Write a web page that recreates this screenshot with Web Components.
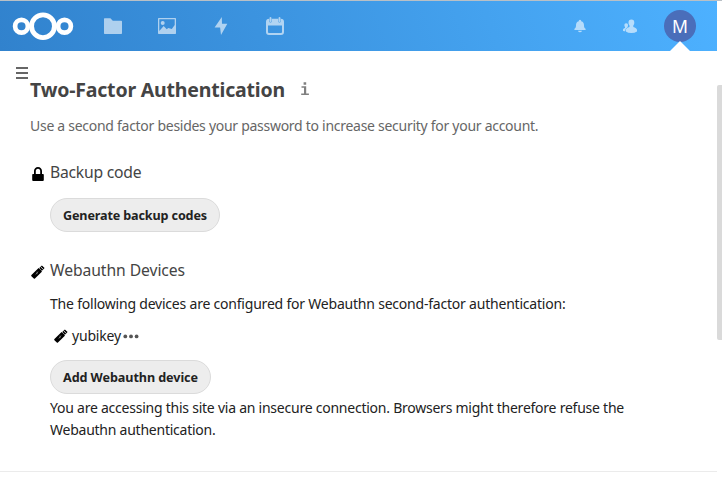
<!DOCTYPE html>
<html lang="en">
<head>
<meta charset="utf-8">
<title>Two-Factor Authentication</title>
<style>
  html, body { margin: 0; height: 100%; overflow: hidden; background: #fff; }
  body { font-family: "Noto Sans", "Open Sans", sans-serif; font-size: 14px; line-height: 22px; color: #222; }
</style>
</head>
<body>
<settings-page></settings-page>
<script>
const define = (name, html, extra = {}) => {
  const t = document.createElement('template');
  t.innerHTML = html;
  customElements.define(name, class extends HTMLElement {
    constructor() {
      super();
      this.attachShadow({ mode: 'open' }).append(t.content.cloneNode(true));
    }
    connectedCallback() { if (extra.connected) extra.connected.call(this); }
  });
};

const icons = {
  logo: [62, 30, '<g fill="none" stroke="#fff"><circle cx="31" cy="15.2" r="11.4" stroke-width="4.8"/><circle cx="9.5" cy="15.2" r="6.4" stroke-width="4.7"/><circle cx="52.5" cy="15.2" r="6.4" stroke-width="4.7"/></g>'],
  folder: [20, 20, '<path fill="#fff" d="M1.6 2.2h5.8l2.4 2.5h8.4q.8 0 .8.8v11.7q0 .8-.8.8H1.8q-.8 0-.8-.8V3q0-.8.6-.8z"/>'],
  photo: [20, 20, '<path fill="#fff" fill-rule="evenodd" d="M1.7 2h16.6q.7 0 .7.7v14.6q0 .7-.7.7H1.7q-.7 0-.7-.7V2.7q0-.7.7-.7zM2.3 3.2v11.900L6.700 10.100l3 3.200 1.600-1.200 3.500 1 2.900-4.100V3.200z"/><circle cx="5.7" cy="7" r="2" fill="#fff"/>'],
  bolt: [20, 20, '<path fill="#fff" d="M10.800 1 3.600 11.500h5.500L10 19l6.300-11.200h-5.300z"/>'],
  calendar: [20, 20, '<path fill="#fff" fill-rule="evenodd" d="M4.300 2.800v2.400a1.200 1.200 0 0 0 2.400 0V2.800h6.600v2.400a1.200 1.200 0 0 0 2.400 0V2.800q3.300 0 3.300 3v10.100q0 3-3 3H4q-3 0-3-3V5.800q0-3 3.300-3zM3 9.400V16q0 .9.900.9h12.200q.9 0 .9-.9V9.400z"/><path stroke="#fff" stroke-width="1.9" stroke-linecap="round" d="M5.500 2v3M14.500 2v3"/>'],
  bell: [16, 16, '<path fill="#fff" d="M8 1.800c-1 0-1.200.8-1.200 1.400C4.700 3.700 4 5.300 4 7.500c0 1.600-.4 2.500-1.600 3.300V12h11.200v-1.200C12.400 10 12 9.100 12 7.500c0-2.200-.7-3.800-2.800-4.300 0-.6-.2-1.400-1.200-1.400zM6 12.700a2.050 2.050 0 0 0 4 0z"/>'],
  contacts: [16, 16, '<path fill="#fff" d="M9.400 1.500c-2.100 0-2.900 1.300-2.900 3 0 1.300.3 2.100 1 3v1.400c-2.100.7-3.600 1.500-3.600 3.100v1.500q2 1.500 5.400 1.500t5.700-1.500V12c0-1.700-1.700-2.400-3.700-3.100V7.500c.7-.9 1-1.700 1-3 0-1.700-.8-3-2.900-3z"/><path fill="#fff" d="M4.200 5.200c-1.300 0-1.800.9-1.800 2 0 .9.200 1.400.6 1.800v.9c-1.300.4-2 .9-2 1.800v1q.8.500 2.100.6.100-2.900 2.500-4.100l-.1-.3q.5-.5.500-1.700c0-1.100-.5-2-1.800-2z"/>'],
  menu: [14, 14, '<path fill="#666" d="M1 1h12v2H1zM1 6h12v2H1zM1 11h12v2H1z"/>'],
  lock: [16, 16, '<path fill="#000" fill-rule="evenodd" d="M8 1C5.700 1 4 2.700 4 5v3H3q-.8 0-.8.800V14q0 1 1 1h9.600q1 0 1-1V8.800q0-.8-.8-.8h-1V5c0-2.300-1.700-4-4-4zm0 1.800c1.400 0 2.200 1 2.200 2.200v3H5.800V5C5.800 3.800 6.600 2.800 8 2.800z"/>'],
  usb: [16, 16, '<g transform="translate(8 8) rotate(-45)"><rect x="-7.6" y="-2.5" width="11" height="5" rx=".8"/><path fill-rule="evenodd" d="M3.700-1.900h3.700v3.800H3.700zM5-1.100v.8h1V-1.100zM5 .3v.8h1V.3z"/><path stroke="#fff" stroke-width=".3" fill="none" d="M-3.500 0h4M-1.500 0l1.200-1M-2.500 0l1.200 1"/></g>'],
  dots: [16, 16, '<g fill="#555"><circle cx="2.3" cy="8.4" r="1.9"/><circle cx="8" cy="8.4" r="1.9"/><circle cx="13.6" cy="8.4" r="1.9"/></g>'],
  info: [16, 16, '<path fill="#808080" d="M6.600 1.300h2.600v2.400H6.600zM4.500 5.200h4.700v7.200h2.700V14H4.200v-1.600H7V6.800H4.500z"/>']
};
customElements.define('ui-icon', class extends HTMLElement {
  constructor() { super(); this.attachShadow({ mode: 'open' }); }
  connectedCallback() {
    const [w, h, body] = icons[this.getAttribute('name')];
    this.shadowRoot.innerHTML = `<style>:host{display:block;flex:none}svg{display:block}</style><svg width="${w}" height="${h}" viewBox="0 0 ${w} ${h}">${body}</svg>`;
  }
});

/* A line of text whose tracking is adjusted to fill the given width. */
define('text-line', `<style>
  :host { display: block; white-space: nowrap; }
  span { display: inline-block; }
</style><span><slot></slot></span>`, {
  connected() {
    const fit = () => {
      const span = this.shadowRoot.querySelector('span');
      span.style.letterSpacing = '0';
      const w = span.getBoundingClientRect().width;
      const n = this.textContent.length;
      if (w) span.style.letterSpacing = ((+this.getAttribute('width') - w) / n).toFixed(4) + 'px';
    };
    fit();
    requestAnimationFrame(fit);
  }
});

define('pill-button', `<style>
  :host { display: flex; width: max-content; }
  button { box-sizing: border-box; height: 34px; padding: 1px 12px 0; border: 1px solid #dbdbdb; border-radius: 17px; background: #ededed; color: #222; font: bold 12.6px/31px "Noto Sans", sans-serif; }
</style><button type="button"><slot></slot></button>`);

define('user-avatar', `<style>
  :host { display: flex; position: relative; height: 50px; align-items: center; }
  .disc { width: 32px; height: 32px; border-radius: 50%; background: #4a6eba; color: #fff; font: 17.6px/32px "Noto Sans", sans-serif; text-align: center; }
  .caret { position: absolute; bottom: 0; left: 6px; border: 10px solid transparent; border-top: 0; border-bottom-color: #fff; }
</style><div class="disc"><slot></slot></div><div class="caret"></div>`);

define('app-header', `<style>
  :host { display: flex; box-sizing: border-box; width: 717px; height: 50px; padding: 0 21px 0 12px; align-items: center; justify-content: space-between; background: linear-gradient(70deg, #3182cd 0%, #4db1ff 100%); }
  nav, .right { display: flex; align-items: center; }
  nav ui-icon { opacity: .6; margin-right: 34px; }
  ui-icon[name=logo] { margin-right: 29px; opacity: 1; }
  .right > ui-icon { opacity: .6; margin-right: 34px; }
  .right > ui-icon + ui-icon { margin-right: 26px; }
</style>
<nav><ui-icon name="logo"></ui-icon><ui-icon name="folder"></ui-icon><ui-icon name="photo"></ui-icon><ui-icon name="bolt"></ui-icon><ui-icon name="calendar"></ui-icon></nav>
<div class="right"><ui-icon name="bell"></ui-icon><ui-icon name="contacts"></ui-icon><user-avatar>M</user-avatar></div>`);

define('factor-section', `<style>
  :host { display: block; }
  header { display: flex; gap: 4px; height: 22px; color: #444; font-size: 15.7px; }
  header ::slotted(ui-icon) { padding-top: 5px; }
  .body { padding-left: 20px; }
</style><header><slot name="icon"></slot><slot name="title"></slot></header><div class="body"><slot></slot></div>`);

define('settings-page', `<style>
  :host { display: flex; flex-direction: column; height: 479px; box-sizing: border-box; border-top: 1px solid #b9c0c6; }
  .view { display: flex; flex: 1; }
  main { width: 717px; height: 420px; border-bottom: 1px solid #ebebeb; display: grid; grid-template-columns: 15px 1fr; }
  .toggle { padding-top: 15px; }
  .toggle ui-icon { margin-left: 15px; width: 14px; }
  .content { padding: 28px 0 0 15px; }
  h2 { display: flex; align-items: center; gap: 12px; margin: 0 0 14px; height: 22px; font-size: 19.5px; color: #444; }
  h2 ui-icon { padding-bottom: 2px; }
  .hint { color: #666; margin-bottom: 24px; }
  .backup { margin-bottom: 27px; }
  .backup pill-button { margin-top: 15px; }
  .intro { margin-top: 12px; }
  .device { display: flex; gap: 2px; align-items: center; height: 22px; margin: 10px 0 13px 3px; }
  .device text-line { padding-left: 1px; }
  .notice { margin-top: 3px; }
  .track { width: 5px; padding-top: 34px; }
  .thumb { height: 255px; border-radius: 2px 0 0 2px; background: #dadada; }
</style>
<app-header></app-header>
<div class="view">
  <main>
    <div class="toggle"><ui-icon name="menu"></ui-icon></div>
    <div class="content">
      <h2><text-line width="255">Two-Factor Authentication</text-line><ui-icon name="info"></ui-icon></h2>
      <text-line class="hint" width="508.300">Use a second factor besides your password to increase security for your account.</text-line>
      <factor-section class="backup">
        <ui-icon slot="icon" name="lock"></ui-icon>
        <text-line slot="title" width="91.300">Backup code</text-line>
        <pill-button><text-line width="144">Generate backup codes</text-line></pill-button>
      </factor-section>
      <factor-section>
        <ui-icon slot="icon" name="usb"></ui-icon>
        <text-line slot="title" width="135">Webauthn Devices</text-line>
        <text-line class="intro" width="515.500">The following devices are configured for Webauthn second-factor authentication:</text-line>
        <div class="device"><ui-icon name="usb"></ui-icon><text-line width="49">yubikey</text-line><ui-icon name="dots"></ui-icon></div>
        <pill-button><text-line width="135">Add Webauthn device</text-line></pill-button>
        <div class="notice"><text-line width="574">You are accessing this site via an insecure connection. Browsers might therefore refuse the</text-line><text-line width="165.500">Webauthn authentication.</text-line></div>
      </factor-section>
    </div>
  </main>
  <div class="track"><div class="thumb"></div></div>
</div>`);
</script>
</body>
</html>
